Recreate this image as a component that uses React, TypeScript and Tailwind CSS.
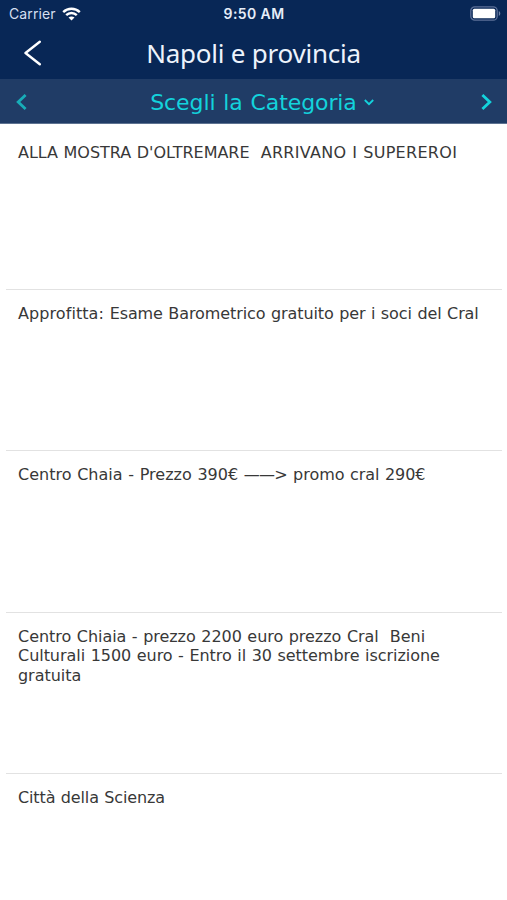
import React from "react";

interface TitlePart {
    text: string;
    tracking: string;
}

interface Offer {
    id: number;
    title: TitlePart[];
}

const offers: Offer[] = [
    {
        id: 1,
        title: [
            { text: "ALLA MOSTRA D'OLTREMARE  ", tracking: "tracking-[-0.02px]" },
            { text: "ARRIVANO I SUPEREROI", tracking: "tracking-[0.3px]" },
        ],
    },
    {
        id: 2,
        title: [
            { text: "Approfitta: ", tracking: "tracking-[0.08px]" },
            { text: "Esame Barometrico gratuito per i soci del Cral", tracking: "tracking-[-0.09px]" },
        ],
    },
    {
        id: 3,
        title: [
            { text: "Centro Chaia - Prezzo 390€ ", tracking: "tracking-[0.02px]" },
            { text: "——", tracking: "tracking-[-0.8px]" },
            { text: "> promo cral 290€", tracking: "tracking-[-0.05px]" },
        ],
    },
    {
        id: 4,
        title: [
            {
                text: "Centro Chiaia - prezzo 2200 euro prezzo Cral  Beni\nCulturali 1500 euro - Entro il 30 settembre iscrizione\ngratuita",
                tracking: "tracking-[-0.04px]",
            },
        ],
    },
    { id: 5, title: [{ text: "Città della Scienza", tracking: "tracking-[-0.13px]" }] },
];

function StatusBar() {
    return (
        <div className="flex h-[27px] items-center justify-between pl-[9px] pr-[6px] font-['Inter',sans-serif] text-white">
            <div className="flex flex-1 items-center gap-[6px]">
                <span className="text-[14px] leading-none tracking-[0.12px] text-[#d5dff0]">Carrier</span>
                <svg width="19" height="14" viewBox="0 0 19 14" fill="none" stroke="white" strokeWidth="2.4">
                    <path d="M1.2 5.1C5.9 .6 13.1 .6 17.8 5.1" />
                    <path d="M4.2 8.2C7.2 5.3 11.8 5.3 14.8 8.2" />
                    <path d="M9.5 13.6L6.5 10.6C8.2 9 10.8 9 12.5 10.6Z" fill="white" stroke="none" />
                </svg>
            </div>
            <span className="pr-[2px] text-[14px] font-semibold leading-none tracking-[0.4px] text-[#e6edf8]">9:50 AM</span>
            <div className="flex flex-1 justify-end">
                <svg width="31" height="15" viewBox="0 0 31 15" fill="none">
                    <rect x=".8" y=".8" width="26.4" height="13.4" rx="4" stroke="#5c7098" strokeWidth="1.3" />
                    <rect x="2.8" y="2.8" width="22.4" height="9.4" rx="1.5" fill="white" />
                    <path d="M28.8 5V10C30.8 9 30.8 6 28.8 5Z" fill="#7184a8" />
                </svg>
            </div>
        </div>
    );
}

export default function App() {
    return (
        <div className="flex h-[900px] w-[507px] flex-col overflow-hidden bg-white">
            <header className="h-[79px] shrink-0 bg-[#082756]">
                <StatusBar />
                <div className="grid h-[51px] grid-cols-[1fr_auto_1fr] items-center">
                    <button aria-label="Indietro" className="ml-6 justify-self-start">
                        <svg width="18" height="26" viewBox="0 0 18 26" fill="none" stroke="white" strokeWidth="2.4" strokeLinecap="round" strokeLinejoin="round">
                            <path d="M15.8 1.8L1.5 13L15.8 24.2" />
                        </svg>
                    </button>
                    <h1 className="font-['Noto_Sans',sans-serif] text-[26px] leading-none tracking-[-0.23px] text-[#edf3fc]">Napoli e provincia</h1>
                </div>
            </header>

            {/* Category selector */}
            <nav className="flex h-[45px] shrink-0 items-center justify-between border-b border-[#5d7291] bg-[#203c66] pl-4 pr-[15px] pt-[2px] text-[#13d3dc]">
                <svg width="11" height="16" viewBox="0 0 11 16" fill="none" stroke="#18adb8" strokeWidth="2.8">
                    <path d="M9.6 1L2.2 8L9.6 15" />
                </svg>
                <div className="flex items-center gap-[7px] pl-4">
                    <span className="pt-[2px] font-['DejaVu_Sans',sans-serif] text-[22px] leading-none tracking-[-0.1px] [word-spacing:1px]">Scegli la Categoria</span>
                    <svg width="10" height="7" viewBox="0 0 10 7" fill="none" stroke="currentColor" strokeWidth="1.8">
                        <path d="M.8 1L5 5.2L9.2 1" />
                    </svg>
                </div>
                <svg width="11" height="16" viewBox="0 0 11 16" fill="none" stroke="currentColor" strokeWidth="2.8">
                    <path d="M1.4 1L8.8 8L1.4 15" />
                </svg>
            </nav>

            {/* Offers */}
            <ul className="pl-[6px] pr-[5px] pt-[5px]">
                {offers.map((offer) => (
                    <li key={offer.id} className="h-[161.2px] border-b border-[#e2e2e2] px-3 pt-[14px] last:border-b-0">
                        <p className="whitespace-pre font-['DejaVu_Sans',sans-serif] text-[16px] leading-[19.5px] text-[#383838] [word-spacing:0.5px]">
                            {offer.title.map((part) => (
                                <span key={part.text} className={part.tracking}>{part.text}</span>
                            ))}
                        </p>
                    </li>
                ))}
            </ul>
        </div>
    );
}
